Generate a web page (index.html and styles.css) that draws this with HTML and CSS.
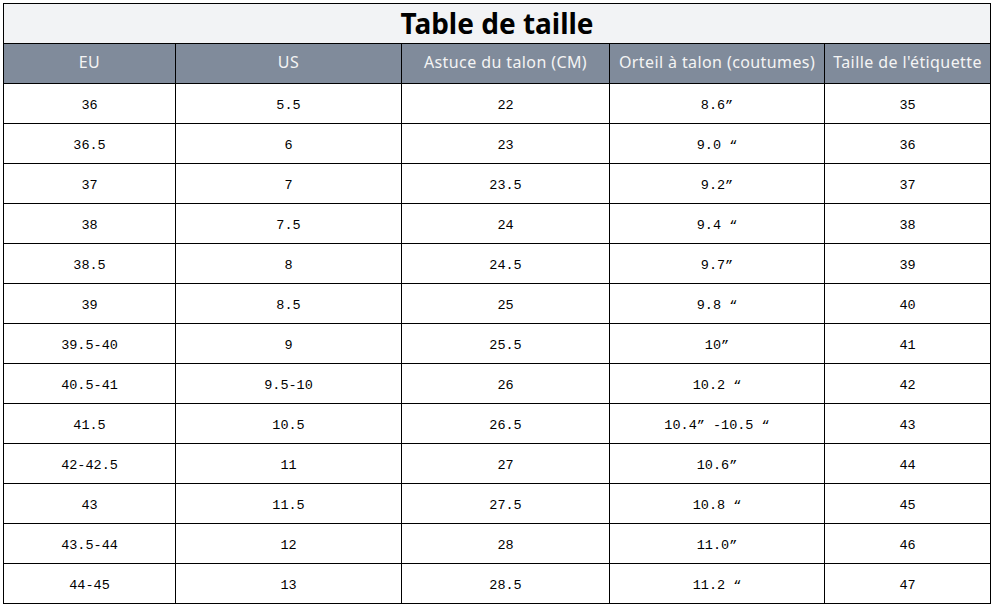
FILE: index.html
```html
<!DOCTYPE html>
<html lang="fr">
<head>
<meta charset="utf-8">
<title>Table de taille</title>
<link rel="stylesheet" href="styles.css">
</head>
<body>
<table class="size-table">
  <colgroup>
    <col class="c1"><col class="c2"><col class="c3"><col class="c4"><col class="c5">
  </colgroup>
  <thead>
    <tr class="title-row"><th colspan="5">Table de taille</th></tr>
    <tr class="head-row">
      <th>EU</th><th>US</th><th>Astuce du talon (CM)</th><th>Orteil à talon (coutumes)</th><th>Taille de l'étiquette</th>
    </tr>
  </thead>
  <tbody>
    <tr><td>36</td><td>5.5</td><td>22</td><td>8.6”</td><td>35</td></tr>
    <tr><td>36.5</td><td>6</td><td>23</td><td>9.0 “</td><td>36</td></tr>
    <tr><td>37</td><td>7</td><td>23.5</td><td>9.2”</td><td>37</td></tr>
    <tr><td>38</td><td>7.5</td><td>24</td><td>9.4 “</td><td>38</td></tr>
    <tr><td>38.5</td><td>8</td><td>24.5</td><td>9.7”</td><td>39</td></tr>
    <tr><td>39</td><td>8.5</td><td>25</td><td>9.8 “</td><td>40</td></tr>
    <tr><td>39.5-40</td><td>9</td><td>25.5</td><td>10”</td><td>41</td></tr>
    <tr><td>40.5-41</td><td>9.5-10</td><td>26</td><td>10.2 “</td><td>42</td></tr>
    <tr><td>41.5</td><td>10.5</td><td>26.5</td><td>10.4” -10.5 “</td><td>43</td></tr>
    <tr><td>42-42.5</td><td>11</td><td>27</td><td>10.6”</td><td>44</td></tr>
    <tr><td>43</td><td>11.5</td><td>27.5</td><td>10.8 “</td><td>45</td></tr>
    <tr><td>43.5-44</td><td>12</td><td>28</td><td>11.0”</td><td>46</td></tr>
    <tr><td>44-45</td><td>13</td><td>28.5</td><td>11.2 “</td><td>47</td></tr>
  </tbody>
</table>
</body>
</html>
```
FILE: styles.css
```css
html, body {
  margin: 0;
  padding: 0;
  background: #ffffff;
}
body {
  padding: 3px 0 0 3px;
}
.size-table {
  border-collapse: collapse;
  table-layout: fixed;
  width: 987px;
}
.c1 { width: 172px; }
.c2 { width: 226px; }
.c3 { width: 208px; }
.c4 { width: 215px; }
.c5 { width: 166px; }
.size-table th,
.size-table td {
  border: 1px solid #000;
  padding: 0;
  height: 40px;
  text-align: center;
  vertical-align: middle;
  box-sizing: border-box;
}
.title-row th {
  background: #f2f3f5;
  color: #000;
  font-family: "Noto Sans", "Open Sans", sans-serif;
  font-weight: 700;
  font-size: 28px;
  line-height: 1;
  padding-bottom: 2px;
}
.head-row th {
  background: #808b9b;
  color: #f4f4f4;
  font-family: "Noto Sans", "Open Sans", sans-serif;
  font-weight: 400;
  font-size: 16px;
  letter-spacing: 0.4px;
  white-space: nowrap;
  padding-bottom: 4px;
}
.size-table td {
  font-family: "Liberation Mono", monospace;
  font-size: 13.5px;
  color: #000;
  white-space: pre;
  padding-top: 3px;
}
```
